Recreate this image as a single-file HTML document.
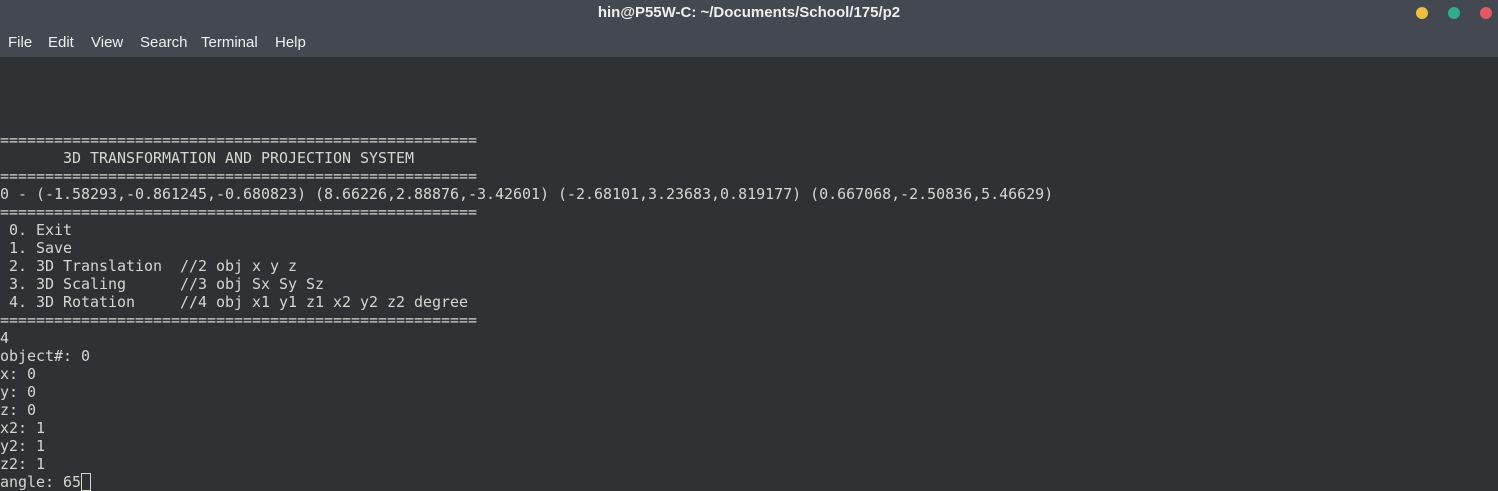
<!DOCTYPE html>
<html><head><style>
body{margin:0;width:1498px;height:490px;overflow:hidden;background:#2e3235;font-family:"Liberation Sans","DejaVu Sans",sans-serif;}
#hdr{position:absolute;left:0;top:0;width:1498px;height:57px;background:#444850;}
#title{position:absolute;top:4px;left:0;width:1498px;text-align:center;color:#eeeeee;font-weight:bold;font-size:15px;}
.dot{position:absolute;top:7px;width:12px;height:12px;border-radius:50%;}
#menu{position:absolute;top:34px;left:8px;color:#eeeeee;font-size:15px;}
#menu span{position:absolute;top:0;white-space:nowrap;}
#term{position:absolute;left:0;top:131px;margin:0;font-family:"DejaVu Sans Mono",monospace;font-size:15px;letter-spacing:-0.03px;line-height:18px;color:#d3d7cf;white-space:pre;}
.cur{display:inline-block;width:8px;height:16px;border:1px solid #d3d7cf;vertical-align:-4px;}
</style></head><body>
<div id="hdr">
<div id="title">hin@P55W-C: ~/Documents/School/175/p2</div>
<div class="dot" style="left:1416px;background:#f0bf39"></div>
<div class="dot" style="left:1448px;background:#2eae8b"></div>
<div class="dot" style="left:1480px;background:#e5585f"></div>
<div id="menu"><span style="left:0">File</span><span style="left:40px">Edit</span><span style="left:83px">View</span><span style="left:132px">Search</span><span style="left:193px">Terminal</span><span style="left:267px">Help</span></div>
</div>
<pre id="term">=====================================================
       3D TRANSFORMATION AND PROJECTION SYSTEM
=====================================================
0 - (-1.58293,-0.861245,-0.680823) (8.66226,2.88876,-3.42601) (-2.68101,3.23683,0.819177) (0.667068,-2.50836,5.46629)
=====================================================
 0. Exit
 1. Save
 2. 3D Translation  //2 obj x y z
 3. 3D Scaling      //3 obj Sx Sy Sz
 4. 3D Rotation     //4 obj x1 y1 z1 x2 y2 z2 degree
=====================================================
4
object#: 0
x: 0
y: 0
z: 0
x2: 1
y2: 1
z2: 1
angle: 65<span class="cur"></span></pre>
</body></html>
